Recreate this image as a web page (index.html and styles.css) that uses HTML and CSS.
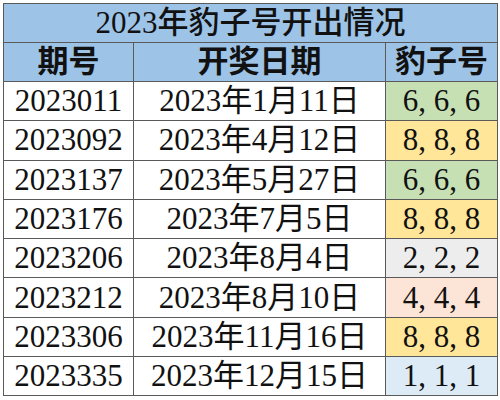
FILE: index.html
```html
<!DOCTYPE html>
<html lang="zh">
<head>
<meta charset="utf-8">
<link rel="stylesheet" href="styles.css">
</head>
<body>
<table class="board">
  <colgroup>
    <col class="c-no">
    <col class="c-date">
    <col class="c-num">
  </colgroup>
  <tr class="title"><td colspan="3">2023年豹子号开出情况</td></tr>
  <tr class="head"><td>期号</td><td>开奖日期</td><td>豹子号</td></tr>
  <tr><td>2023011</td><td>2023年1月11日</td><td class="green">6, 6, 6</td></tr>
  <tr><td>2023092</td><td>2023年4月12日</td><td class="yellow">8, 8, 8</td></tr>
  <tr><td>2023137</td><td>2023年5月27日</td><td class="green">6, 6, 6</td></tr>
  <tr><td>2023176</td><td>2023年7月5日</td><td class="yellow">8, 8, 8</td></tr>
  <tr><td>2023206</td><td>2023年8月4日</td><td class="grey">2, 2, 2</td></tr>
  <tr><td>2023212</td><td>2023年8月10日</td><td class="peach">4, 4, 4</td></tr>
  <tr><td>2023306</td><td>2023年11月16日</td><td class="yellow">8, 8, 8</td></tr>
  <tr><td>2023335</td><td>2023年12月15日</td><td class="blue">1, 1, 1</td></tr>
</table>
</body>
</html>
```
FILE: styles.css
```css
html, body {
  margin: 0;
  padding: 0;
  background: #ffffff;
}
body {
  padding: 3px 3px 0 3px;
}
.board {
  border-collapse: collapse;
  width: 494px;
  table-layout: fixed;
  font-family: "Liberation Serif", "Noto Sans CJK SC", serif;
  font-size: 31px;
  color: #111;
}
.c-no { width: 130px; }
.c-date { width: 252px; }
.c-num { width: 112px; }
.board td {
  border: 1px solid #5a5a5a;
  text-align: center;
  vertical-align: middle;
  padding: 0;
  height: 38.3px;
  line-height: 38px;
  white-space: nowrap;
}
.title td, .head td {
  background: #9dc3e6;
  height: 38px;
}
.title td {
  font-weight: 500;
}
.head td {
  font-weight: bold;
}
.green { background: #c6e0b4; }
.yellow { background: #ffe699; }
.grey { background: #ededed; }
.peach { background: #fce4d6; }
.blue { background: #ddebf7; }
```
